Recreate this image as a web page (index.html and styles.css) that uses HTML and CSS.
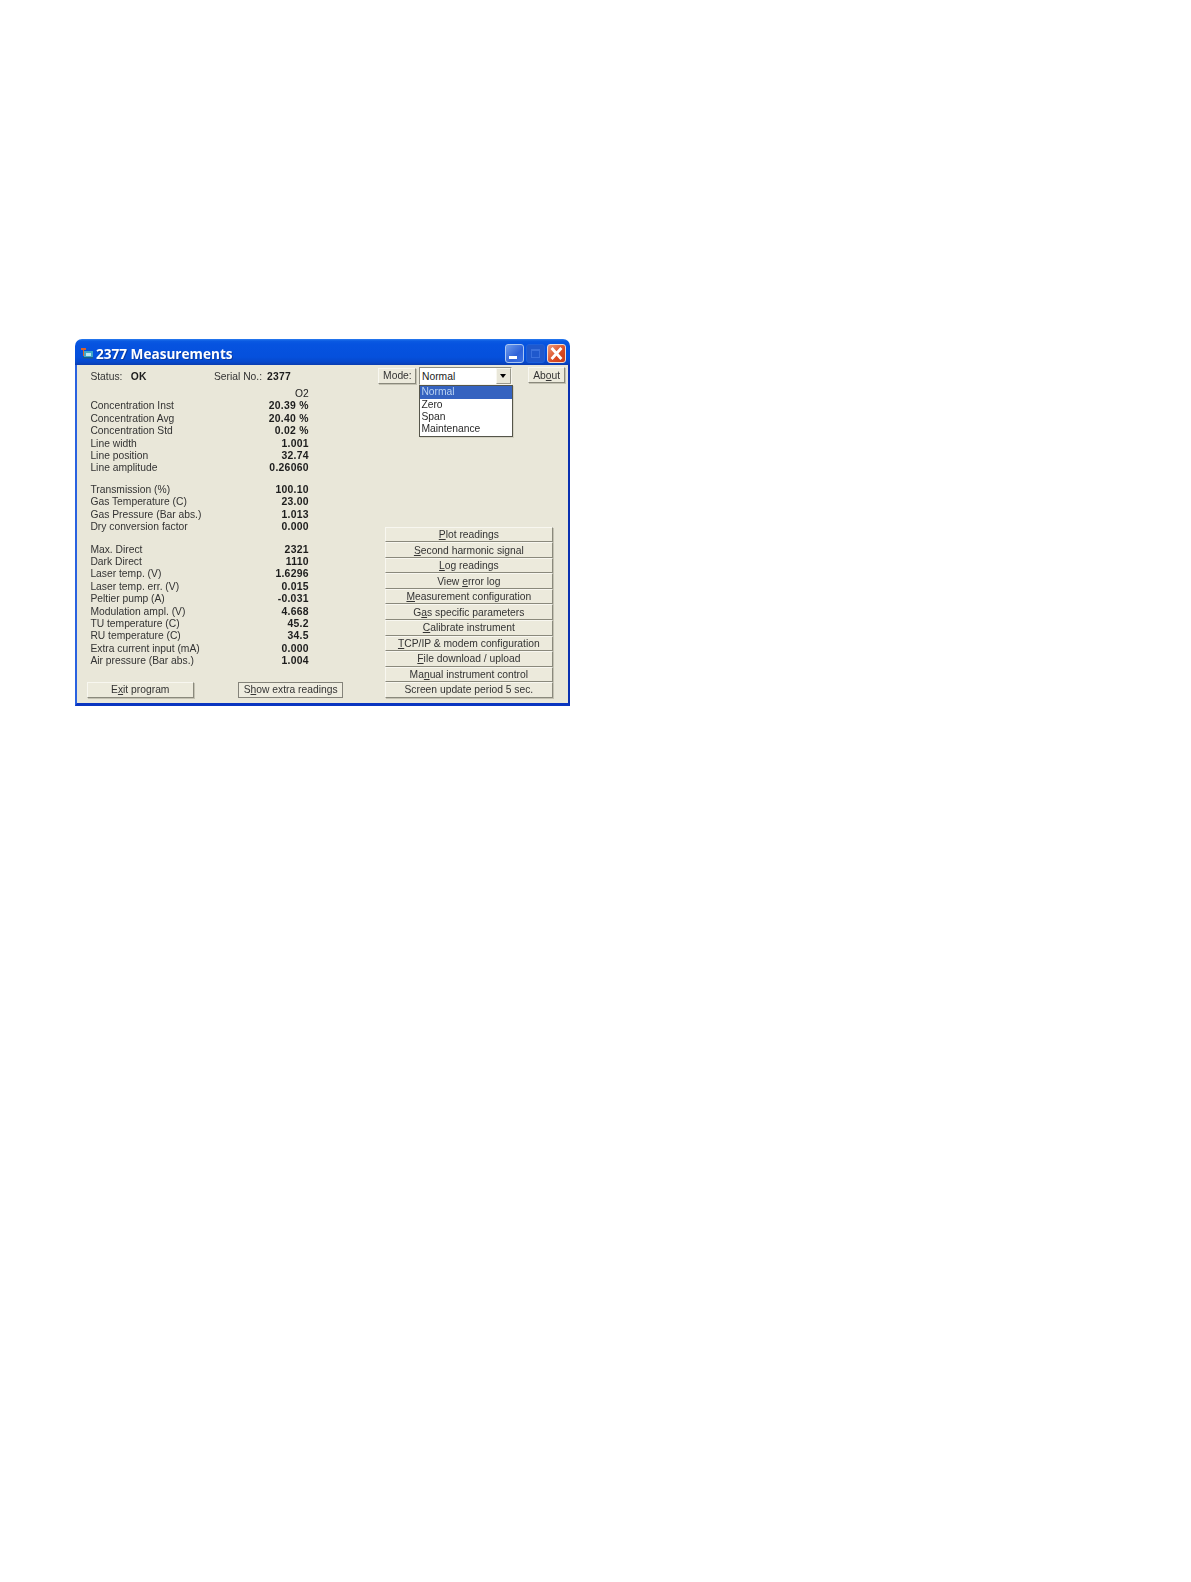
FILE: index.html
```html
<!DOCTYPE html>
<html lang="en">
<head>
<meta charset="utf-8">
<title>2377 Measurements</title>
<link rel="stylesheet" href="styles.css">
</head>
<body>
<div class="window">
  <div class="titlebar">
    <svg class="app-icon" viewBox="0 0 12 12" width="12" height="12">
      <rect x="3" y="4" width="9" height="7" fill="#3fa7c9"/>
      <rect x="5" y="6" width="5" height="3" fill="#bfe6f2"/>
      <path d="M0 1h5v2H3v6H2V3H0z" fill="#d9622b"/>
      <rect x="2" y="10" width="10" height="1.5" fill="#1b5e8a"/>
    </svg>
    <span class="title">2377 Measurements</span>
    <div class="caption-buttons">
      <div class="cap cap-min"><span class="min-glyph"></span></div>
      <div class="cap cap-max"><span class="max-glyph"></span></div>
      <div class="cap cap-close">
        <svg viewBox="0 0 19 19" width="19" height="19"><path d="M5.5 5l8 9M13.5 5l-8 9" stroke="#fff" stroke-width="2.8" stroke-linecap="square" fill="none"/></svg>
      </div>
    </div>
  </div>
  <div class="client">
    <div class="left">
      <div class="status">
        <span class="status-label">Status:</span><b class="status-ok">OK</b>
        <span class="serial-label">Serial No.:</span><b class="serial">2377</b>
      </div>
      <div class="table">
        <div class="row head"><span></span><span class="gas">O2</span></div>
        <div class="row"><span>Concentration Inst</span><b>20.39 %</b></div>
        <div class="row"><span>Concentration Avg</span><b>20.40 %</b></div>
        <div class="row"><span>Concentration Std</span><b>0.02 %</b></div>
        <div class="row"><span>Line width</span><b>1.001</b></div>
        <div class="row"><span>Line position</span><b>32.74</b></div>
        <div class="row"><span>Line amplitude</span><b>0.26060</b></div>
        <div class="row group"><span>Transmission (%)</span><b>100.10</b></div>
        <div class="row"><span>Gas Temperature (C)</span><b>23.00</b></div>
        <div class="row"><span>Gas Pressure (Bar abs.)</span><b>1.013</b></div>
        <div class="row"><span>Dry conversion factor</span><b>0.000</b></div>
        <div class="row group-wide"><span>Max. Direct</span><b>2321</b></div>
        <div class="row"><span>Dark Direct</span><b>1110</b></div>
        <div class="row"><span>Laser temp. (V)</span><b>1.6296</b></div>
        <div class="row"><span>Laser temp. err. (V)</span><b>0.015</b></div>
        <div class="row"><span>Peltier pump (A)</span><b>-0.031</b></div>
        <div class="row"><span>Modulation ampl. (V)</span><b>4.668</b></div>
        <div class="row"><span>TU temperature (C)</span><b>45.2</b></div>
        <div class="row"><span>RU temperature (C)</span><b>34.5</b></div>
        <div class="row"><span>Extra current input (mA)</span><b>0.000</b></div>
        <div class="row"><span>Air pressure (Bar abs.)</span><b>1.004</b></div>
      </div>
      <div class="bottom-buttons">
        <div class="btn btn-exit">E<u>x</u>it program</div>
        <div class="btn btn-extra">S<u>h</u>ow extra readings</div>
      </div>
    </div>
    <div class="right">
      <div class="top-controls">
        <div class="btn btn-mode">Mode:</div>
        <div class="combo">
          <span class="combo-value">Normal</span>
          <span class="combo-arrow"><i></i></span>
          <div class="dropdown">
            <div class="option selected">Normal</div>
            <div class="option">Zero</div>
            <div class="option">Span</div>
            <div class="option">Maintenance</div>
          </div>
        </div>
        <div class="btn btn-about">Ab<u>o</u>ut</div>
      </div>
      <div class="commands">
        <div class="btn cmd"><span><u>P</u>lot readings</span></div>
        <div class="btn cmd"><span><u>S</u>econd harmonic signal</span></div>
        <div class="btn cmd"><span><u>L</u>og readings</span></div>
        <div class="btn cmd"><span>View <u>e</u>rror log</span></div>
        <div class="btn cmd"><span><u>M</u>easurement configuration</span></div>
        <div class="btn cmd"><span>G<u>a</u>s specific parameters</span></div>
        <div class="btn cmd"><span><u>C</u>alibrate instrument</span></div>
        <div class="btn cmd"><span><u>T</u>CP/IP &amp; modem configuration</span></div>
        <div class="btn cmd"><span><u>F</u>ile download / upload</span></div>
        <div class="btn cmd"><span>Ma<u>n</u>ual instrument control</span></div>
        <div class="btn cmd"><span>Screen update period 5 sec.</span></div>
      </div>
    </div>
  </div>
</div>
</body>
</html>
```
FILE: styles.css
```css
* { box-sizing: border-box; }
html, body { margin: 0; background: #fff; }
body {
  height: 1582px;
  padding: 339px 0 0 75px;
  font-family: "Liberation Sans", Arial, sans-serif;
  font-size: 10.3px;
  color: #333;
}
.window {
  width: 495px;
  height: 367px;
  display: flex;
  flex-direction: column;
  filter: blur(0.5px);
}
.titlebar {
  height: 26px;
  flex: none;
  padding: 2px 4px 0 6px;
  display: flex;
  align-items: center;
  border-radius: 7px 7px 0 0;
  background: linear-gradient(#2a7cf0 0, #0a5ae2 2px, #0653e0 5px, #0550dc 18px, #0648cc 23px, #0a3cb0 26px);
}
.app-icon { flex: none; }
.title {
  margin-left: 3px;
  font-family: "Open Sans", sans-serif;
  font-weight: 700;
  font-size: 13.6px;
  color: #fff;
  text-shadow: 1px 1px 0 #0a3aa0;
  white-space: nowrap;
}
.caption-buttons { margin-left: auto; display: flex; gap: 2px; margin-top: 1px; }
.cap {
  width: 19px;
  height: 19px;
  border-radius: 3px;
  border: 1px solid #a9c6f2;
  position: relative;
  background: linear-gradient(135deg, #6f9cec, #2f62d8 60%, #3c72e4);
}
.cap-max { background: #1f58cc; border-color: #1c60dc; }
.cap-close { background: linear-gradient(135deg, #ee9a78, #da4a22 60%, #c83c18); border-color: #f2ddd4; }
.cap-close svg { display: block; margin: -1px 0 0 -1px; }
.min-glyph { position: absolute; left: 3px; bottom: 3px; width: 8px; height: 3px; background: #fff; }
.max-glyph { position: absolute; left: 4px; top: 4px; width: 9px; height: 9px; border: 1px solid #3a70dc; border-top-width: 2px; }

.client {
  flex: 1;
  min-height: 0;
  background: #e9e7d9;
  display: flex;
  border-style: solid;
  border-width: 0 2.7px 3.7px 2.3px;
  border-color: #0a35b8 #0a30b0 #0a35c0 #2a62e0;
  padding: 0 1.6px 5.3px 10px;
}
.left { width: 256.4px; flex: none; display: flex; flex-direction: column; }
.status { display: flex; margin: 5.8px 0 0 3.4px; height: 12.4px; line-height: 12.4px; }
.status b, .row b { font-weight: 700; color: #1c1c1c; }
.status-label { width: 40.3px; }
.status-ok { width: 83.3px; letter-spacing: .3px; }
.serial-label { width: 53px; }
.serial { letter-spacing: .3px; }
.table { margin: 4.9px 0 0 3.4px; width: 218.4px; }
.row {
  display: flex;
  justify-content: space-between;
  height: 12.4px;
  line-height: 12.4px;
  white-space: nowrap;
}
.row b { letter-spacing: .27px; font-size: 10.4px; }
.gas { color: #1c1c1c; }
.group { margin-top: 9px; }
.group-wide { margin-top: 10.3px; }
.btn {
  background: #eceadc;
  border: 1px solid;
  border-color: #f8f7f0 #8a897c #8a897c #f8f7f0;
  box-shadow: 1px 1px 0 #c4c2b3;
  display: flex;
  align-items: center;
  justify-content: center;
  white-space: nowrap;
}
.bottom-buttons {
  margin-top: auto;
  display: flex;
  align-items: flex-end;
  justify-content: space-between;
}
.btn-exit { width: 106.5px; height: 16px; }
.btn-extra {
  width: 105.6px;
  height: 16px;
  border-color: #84837a;
  box-shadow: none;
  background: #eeecdf;
}
.right { flex: 1; margin-left: 35px; display: flex; flex-direction: column; min-width: 0; }
.top-controls { display: flex; align-items: flex-start; margin-top: 2.2px; }
.btn-mode { width: 38px; height: 16.4px; margin-top: .5px; }
.btn-about { width: 37.4px; height: 16px; margin-left: 16px; }
.combo {
  width: 93px;
  height: 18px;
  margin-left: 2.6px;
  position: relative;
  background: #fff;
  border: 1px solid;
  border-color: #8d8c80 #f5f4ec #f5f4ec #8d8c80;
  display: flex;
  align-items: center;
  justify-content: space-between;
  padding-left: 2px;
}
.combo-value { color: #222; }
.combo-arrow {
  width: 15px;
  height: 15.6px;
  background: #e9e7d9;
  border: 1px solid;
  border-color: #f8f7f0 #9a998c #9a998c #f8f7f0;
  display: flex;
  align-items: center;
  justify-content: center;
}
.combo-arrow i {
  width: 0;
  height: 0;
  border-left: 3.5px solid transparent;
  border-right: 3.5px solid transparent;
  border-top: 4px solid #000;
}
.dropdown {
  position: absolute;
  left: -1px;
  top: 17px;
  width: 94px;
  height: 51.5px;
  background: #fff;
  border: 1px solid #55554a;
  box-shadow: 1px 1px 0 #d4d2c2;
  z-index: 2;
}
.option { height: 12.4px; line-height: 12.4px; padding-left: 1.4px; color: #2a2a2a; }
.option.selected { background: #3563c0; color: #b9d2f2; }
.commands {
  margin-top: auto;
  margin-left: 6.3px;
  width: 168.3px;
  height: 171px;
  display: flex;
  flex-direction: column;
}
.cmd { flex: 1; min-height: 0; }
```
